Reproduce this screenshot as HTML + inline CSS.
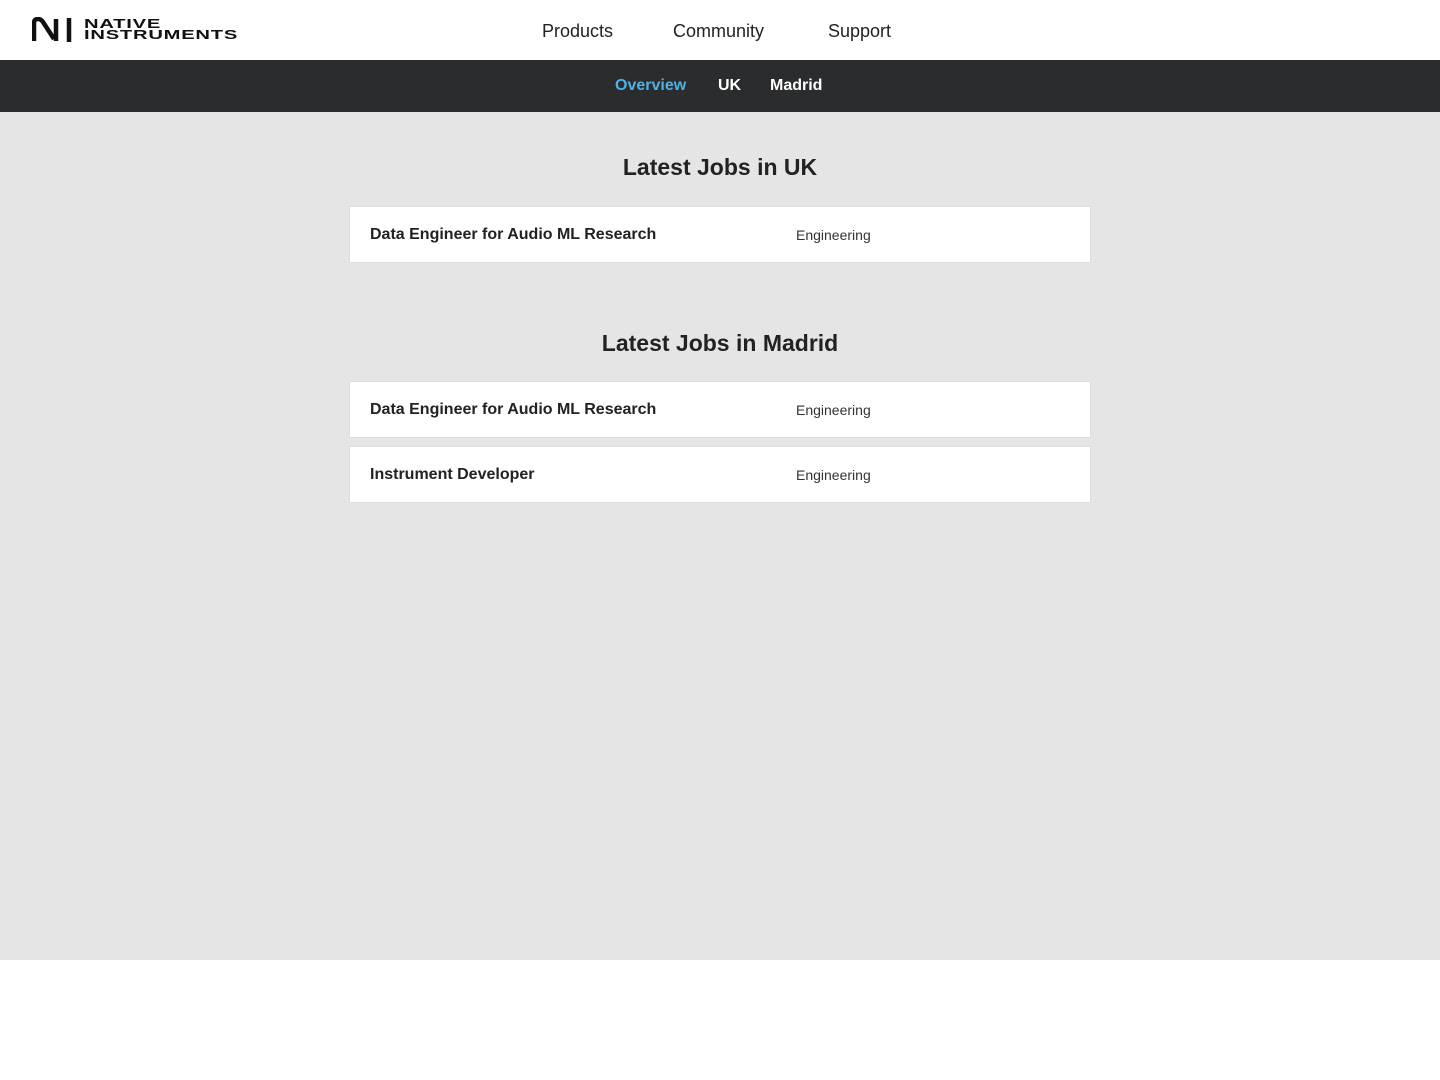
<!DOCTYPE html>
<html><head><meta charset="utf-8"><style>
body{margin:0;font-family:"Liberation Sans",sans-serif;background:#fff;}
.top{height:60px;background:#fff;position:relative;}
.logo{position:absolute;left:32px;top:17px;}
.brand{position:absolute;left:84px;top:18px;font-weight:bold;font-size:13px;line-height:11px;letter-spacing:0.5px;color:#111;transform:scaleX(1.55);transform-origin:left;}
.nav{position:absolute;top:21px;font-size:18px;color:#222;}
.sub{height:52px;background:#2b2c2d;position:relative;}
.sub span{position:absolute;top:17px;font-size:16px;font-weight:bold;color:#fff;}
.main{background:#e5e5e5;height:848px;position:relative;}
h2{position:absolute;width:100%;text-align:center;margin:0;font-size:23px;color:#222;}
.row{position:absolute;left:349px;width:742px;height:57px;background:#fff;border:1px solid #ddd;box-sizing:border-box;}
.row .t{position:absolute;left:20px;top:19px;font-size:16px;font-weight:bold;color:#222;}
.row .c{position:absolute;left:446px;top:20px;font-size:14px;color:#333;}
</style></head><body>
<div class="top">
<svg class="logo" width="42" height="26" viewBox="0 0 42 26"><path d="M2 24V6Q2 2 6 2Q9 2 11 5L22 22M24 2V24" fill="none" stroke="#111" stroke-width="4.5"/><path d="M37 1V25" stroke="#111" stroke-width="4.5"/></svg>
<div class="brand">NATIVE<br>INSTRUMENTS</div>
<span class="nav" style="left:542px">Products</span>
<span class="nav" style="left:673px">Community</span>
<span class="nav" style="left:828px">Support</span>
</div>
<div class="sub">
<span style="left:615px;color:#4fb1e6">Overview</span>
<span style="left:718px">UK</span>
<span style="left:770px">Madrid</span>
</div>
<div class="main">
<h2 style="top:42px">Latest Jobs in UK</h2>
<div class="row" style="top:94px"><span class="t">Data Engineer for Audio ML Research</span><span class="c">Engineering</span></div>
<h2 style="top:218px">Latest Jobs in Madrid</h2>
<div class="row" style="top:269px"><span class="t">Data Engineer for Audio ML Research</span><span class="c">Engineering</span></div>
<div class="row" style="top:334px"><span class="t">Instrument Developer</span><span class="c">Engineering</span></div>
</div>
</body></html>
